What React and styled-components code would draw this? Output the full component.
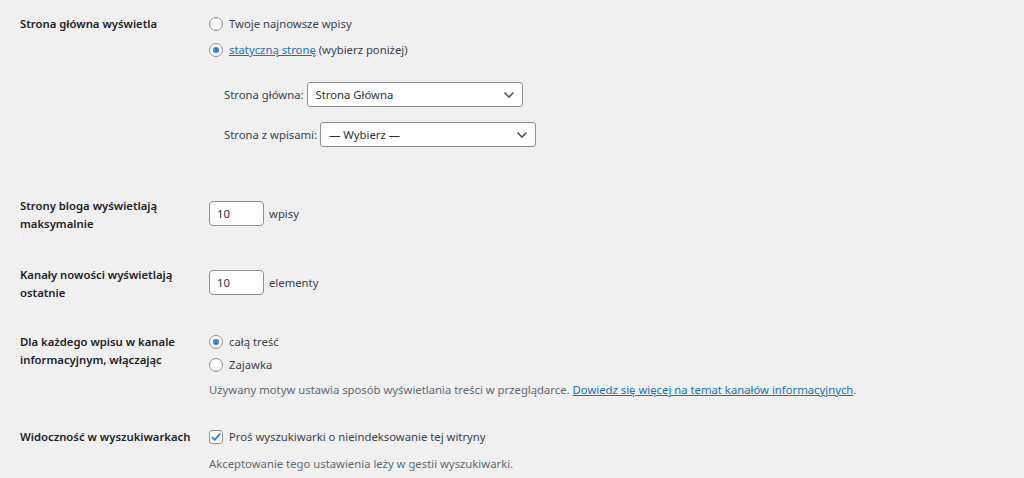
import React from "react";
import styled, { createGlobalStyle } from "styled-components";

const GlobalStyle = createGlobalStyle`
  html, body {
    margin: 0;
    padding: 0;
    background: #f0f0f1;
  }
  body {
    font-family: "Noto Sans", "Liberation Sans", sans-serif;
    font-size: 11.3px;
    line-height: 18px;
    color: #3c434a;
  }
`;

export default function App() {
  return (
    <Page>
      <GlobalStyle />
      <Row $top={15}>
        <Label>Strona główna wyświetla</Label>
        <Field>
          <Choice $gap={8}>
            <Radio />
            Twoje najnowsze wpisy
          </Choice>
          <Choice $gap={8}>
            <Radio $checked />
            <span>
              <TextLink href="#">statyczną stronę</TextLink> (wybierz poniżej)
            </span>
          </Choice>
          <Pickers>
            <PickerRow>
              Strona główna:
              <Select>
                Strona Główna
                <Chevron />
              </Select>
            </PickerRow>
            <PickerRow>
              Strona z wpisami:
              <Select>
                — Wybierz —
                <Chevron />
              </Select>
            </PickerRow>
          </Pickers>
        </Field>
      </Row>

      <Row $top={50}>
        <Label>Strony bloga wyświetlają maksymalnie</Label>
        <Field $offset={4}>
          <InlineRow>
            <NumberBox>10</NumberBox>
            wpisy
          </InlineRow>
        </Field>
      </Row>

      <Row $top={33}>
        <Label>Kanały nowości wyświetlają ostatnie</Label>
        <Field $offset={4}>
          <InlineRow>
            <NumberBox>10</NumberBox>
            elementy
          </InlineRow>
        </Field>
      </Row>

      <Row $top={31}>
        <Label>Dla każdego wpisu w kanale informacyjnym, włączając</Label>
        <Field>
          <Choice $gap={5}>
            <Radio $checked />
            całą treść
          </Choice>
          <Choice $gap={7}>
            <Radio />
            Zajawka
          </Choice>
          <Description>
            Używany motyw ustawia sposób wyświetlania treści w przeglądarce.{" "}
            <TextLink href="#">
              Dowiedz się więcej na temat kanałów informacyjnych
            </TextLink>
            .
          </Description>
        </Field>
      </Row>

      <Row $top={29}>
        <Label>Widoczność w wyszukiwarkach</Label>
        <Field>
          <Choice $gap={9}>
            <Checkbox>
              <svg width="12" height="12" viewBox="0 0 12 12">
                <path
                  d="M2.2 6.3 L4.8 8.9 L9.8 2.9"
                  fill="none"
                  stroke="#3582c4"
                  strokeWidth="1.8"
                  strokeLinecap="round"
                  strokeLinejoin="round"
                />
              </svg>
            </Checkbox>
            Proś wyszukiwarki o nieindeksowanie tej witryny
          </Choice>
          <Description>
            Akceptowanie tego ustawienia leży w gestii wyszukiwarki.
          </Description>
        </Field>
      </Row>
    </Page>
  );
}

function Chevron() {
  return (
    <svg width="12" height="8" viewBox="0 0 12 8">
      <path
        d="M1.5 1.5 L6 6 L10.5 1.5"
        fill="none"
        stroke="#50575e"
        strokeWidth="1.6"
      />
    </svg>
  );
}

const Page = styled.div`
  padding: 0 20px 20px 20px;
  width: 1024px;
  box-sizing: border-box;
`;

const Row = styled.div`
  display: grid;
  grid-template-columns: 189px 1fr;
  align-items: start;
  padding-top: ${(p) => p.$top}px;
`;

const Label = styled.div`
  font-weight: 600;
  color: #1d2327;
  width: 180px;
`;

const Field = styled.div`
  display: flex;
  flex-direction: column;
  align-items: flex-start;
  padding-top: ${(p) => p.$offset || 0}px;
`;

const Choice = styled.label`
  display: flex;
  align-items: center;
  gap: 6px;
  margin-bottom: ${(p) => p.$gap}px;
`;

const Radio = styled.span`
  width: 14px;
  height: 14px;
  box-sizing: border-box;
  border: 1px solid #8c8f94;
  border-radius: 50%;
  background: #fff;
  display: inline-flex;
  align-items: center;
  justify-content: center;

  &::after {
    content: "";
    display: ${(p) => (p.$checked ? "block" : "none")};
    width: 6px;
    height: 6px;
    border-radius: 50%;
    background: #3582c4;
  }
`;

const Checkbox = styled.span`
  width: 14px;
  height: 14px;
  box-sizing: border-box;
  border: 1px solid #8c8f94;
  border-radius: 3px;
  background: #fff;
  display: inline-flex;
  align-items: center;
  justify-content: center;
`;

const TextLink = styled.a`
  color: #2271b1;
  text-decoration: underline;
`;

const Pickers = styled.div`
  display: flex;
  flex-direction: column;
  gap: 15px;
  margin: 15px 0 0 15px;
`;

const PickerRow = styled.div`
  display: flex;
  align-items: center;
  gap: 3px;
`;

const Select = styled.div`
  width: 216px;
  height: 25px;
  box-sizing: border-box;
  border: 1px solid #8c8f94;
  border-radius: 3px;
  background: #fff;
  color: #2c3338;
  padding: 0 7px 0 8px;
  display: flex;
  align-items: center;
  justify-content: space-between;
`;

const InlineRow = styled.div`
  display: flex;
  align-items: center;
  gap: 5px;
`;

const NumberBox = styled.div`
  width: 55px;
  height: 25px;
  box-sizing: border-box;
  border: 1px solid #8c8f94;
  border-radius: 4px;
  background: #fff;
  color: #2c3338;
  padding: 0 7px;
  display: flex;
  align-items: center;
`;

const Description = styled.p`
  margin: 0;
  color: #646970;
`;
